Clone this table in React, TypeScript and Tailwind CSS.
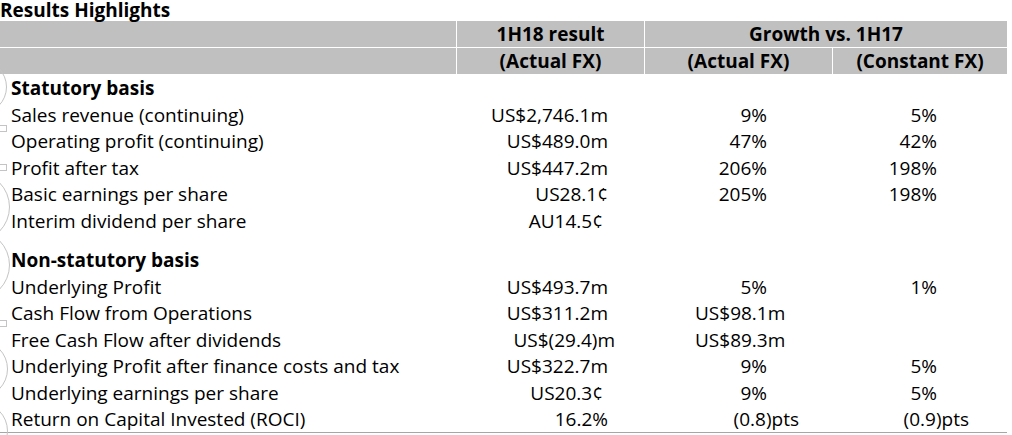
import React from 'react';

type Row = {
  label: string;
  bold?: boolean;
  v1?: string;
  v1c?: string;
  v2?: string;
  v2c?: string;
  v3?: string;
  v3c?: string;
};

const statutory: Row[] = [
  { label: 'Statutory basis', bold: true },
  { label: 'Sales revenue (continuing)', v1: 'US$2,746.1m', v2: '9%', v3: '5%' },
  { label: 'Operating profit (continuing)', v1: 'US$489.0m', v2: '47%', v3: '42%' },
  { label: 'Profit after tax', v1: 'US$447.2m', v2: '206%', v3: '198%' },
  { label: 'Basic earnings per share', v1: 'US28.1¢', v2: '205%', v3: '198%' },
  { label: 'Interim dividend per share', v1: 'AU14.5¢', v1c: 'text-right pr-[42px]' },
];

const nonStatutory: Row[] = [
  { label: 'Non-statutory basis', bold: true },
  { label: 'Underlying Profit', v1: 'US$493.7m', v2: '5%', v3: '1%' },
  { label: 'Cash Flow from Operations', v1: 'US$311.2m', v2: 'US$98.1m', v2c: 'text-left pl-[50px]' },
  { label: 'Free Cash Flow after dividends', v1: 'US$(29.4)m', v1c: 'text-right pr-[30px]', v2: 'US$89.3m', v2c: 'text-left pl-[50px]' },
  { label: 'Underlying Profit after finance costs and tax', v1: 'US$322.7m', v2: '9%', v3: '5%' },
  { label: 'Underlying earnings per share', v1: 'US20.3¢', v1c: 'text-right pr-[42px]', v2: '9%', v3: '5%' },
  { label: 'Return on Capital Invested (ROCI)', v1: '16.2%', v2: '(0.8)pts', v2c: 'text-right pr-[34px]', v3: '(0.9)pts', v3c: 'text-right pr-[38px]' },
];

const DataRow: React.FC<{ row: Row }> = ({ row }) => (
  <div className="grid grid-cols-[457px_188px_188px_174px] h-[26.5px] pt-[3px] leading-[23.5px] text-[19px]">
    <div className={`pl-[11px] whitespace-nowrap ${row.bold ? 'font-bold' : ''}`}>{row.label}</div>
    <div className={`whitespace-nowrap ${row.v1c ?? 'text-right pr-[37px]'}`}>{row.v1}</div>
    <div className={`whitespace-nowrap ${row.v2c ?? 'text-right pr-[66px]'}`}>{row.v2}</div>
    <div className={`whitespace-nowrap ${row.v3c ?? 'text-right pr-[70px]'}`}>{row.v3}</div>
  </div>
);

const Ring: React.FC<{ className: string }> = ({ className }) => (
  <div className={`absolute rounded-full border-[1.5px] border-[#c4c4c4] ${className}`} />
);

const Box: React.FC<{ className: string }> = ({ className }) => (
  <div className={`absolute w-[8px] h-[7px] border border-[#c4c4c4] ${className}`} />
);

export default function App() {
  return (
    <div className="relative w-[1012px] h-[435px] bg-white text-black overflow-hidden font-['Open_Sans',sans-serif]">
      <div className="h-[21px] leading-[21px] text-[19px] font-bold whitespace-nowrap">Results Highlights</div>

      <div className="w-[1007px] bg-[#c0c0c0] text-[19px] font-bold">
        <div className="grid grid-cols-[457px_188px_362px] h-[27px] leading-[27px] border-b border-white">
          <div className="border-r border-white" />
          <div className="text-center border-r border-white">1H18 result</div>
          <div className="text-center">Growth vs. 1H17</div>
        </div>
        <div className="grid grid-cols-[457px_188px_188px_174px] h-[26px] leading-[26px]">
          <div className="border-r border-white" />
          <div className="text-center border-r border-white">(Actual FX)</div>
          <div className="text-center border-r border-white">(Actual FX)</div>
          <div className="text-center">(Constant FX)</div>
        </div>
      </div>

      <div className="w-[1007px] border-b border-[#a6a6a6]">
        {statutory.map((r) => (
          <DataRow key={r.label} row={r} />
        ))}
        <div className="h-[13px]" />
        {nonStatutory.map((r) => (
          <DataRow key={r.label} row={r} />
        ))}
      </div>

      <Ring className="w-[54px] h-[54px] left-[-47px] top-[60px]" />
      <Box className="left-[-1px] top-[125px]" />
      <Box className="left-[-1px] top-[164px]" />
      <Ring className="w-[70px] h-[70px] left-[-60px] top-[172px]" />
      <Ring className="w-[70px] h-[70px] left-[-60px] top-[230px]" />
      <Box className="left-[-1px] top-[320px]" />
      <Ring className="w-[58px] h-[58px] left-[-50px] top-[340px]" />
      <Ring className="w-[58px] h-[58px] left-[-50px] top-[402px]" />
    </div>
  );
}
